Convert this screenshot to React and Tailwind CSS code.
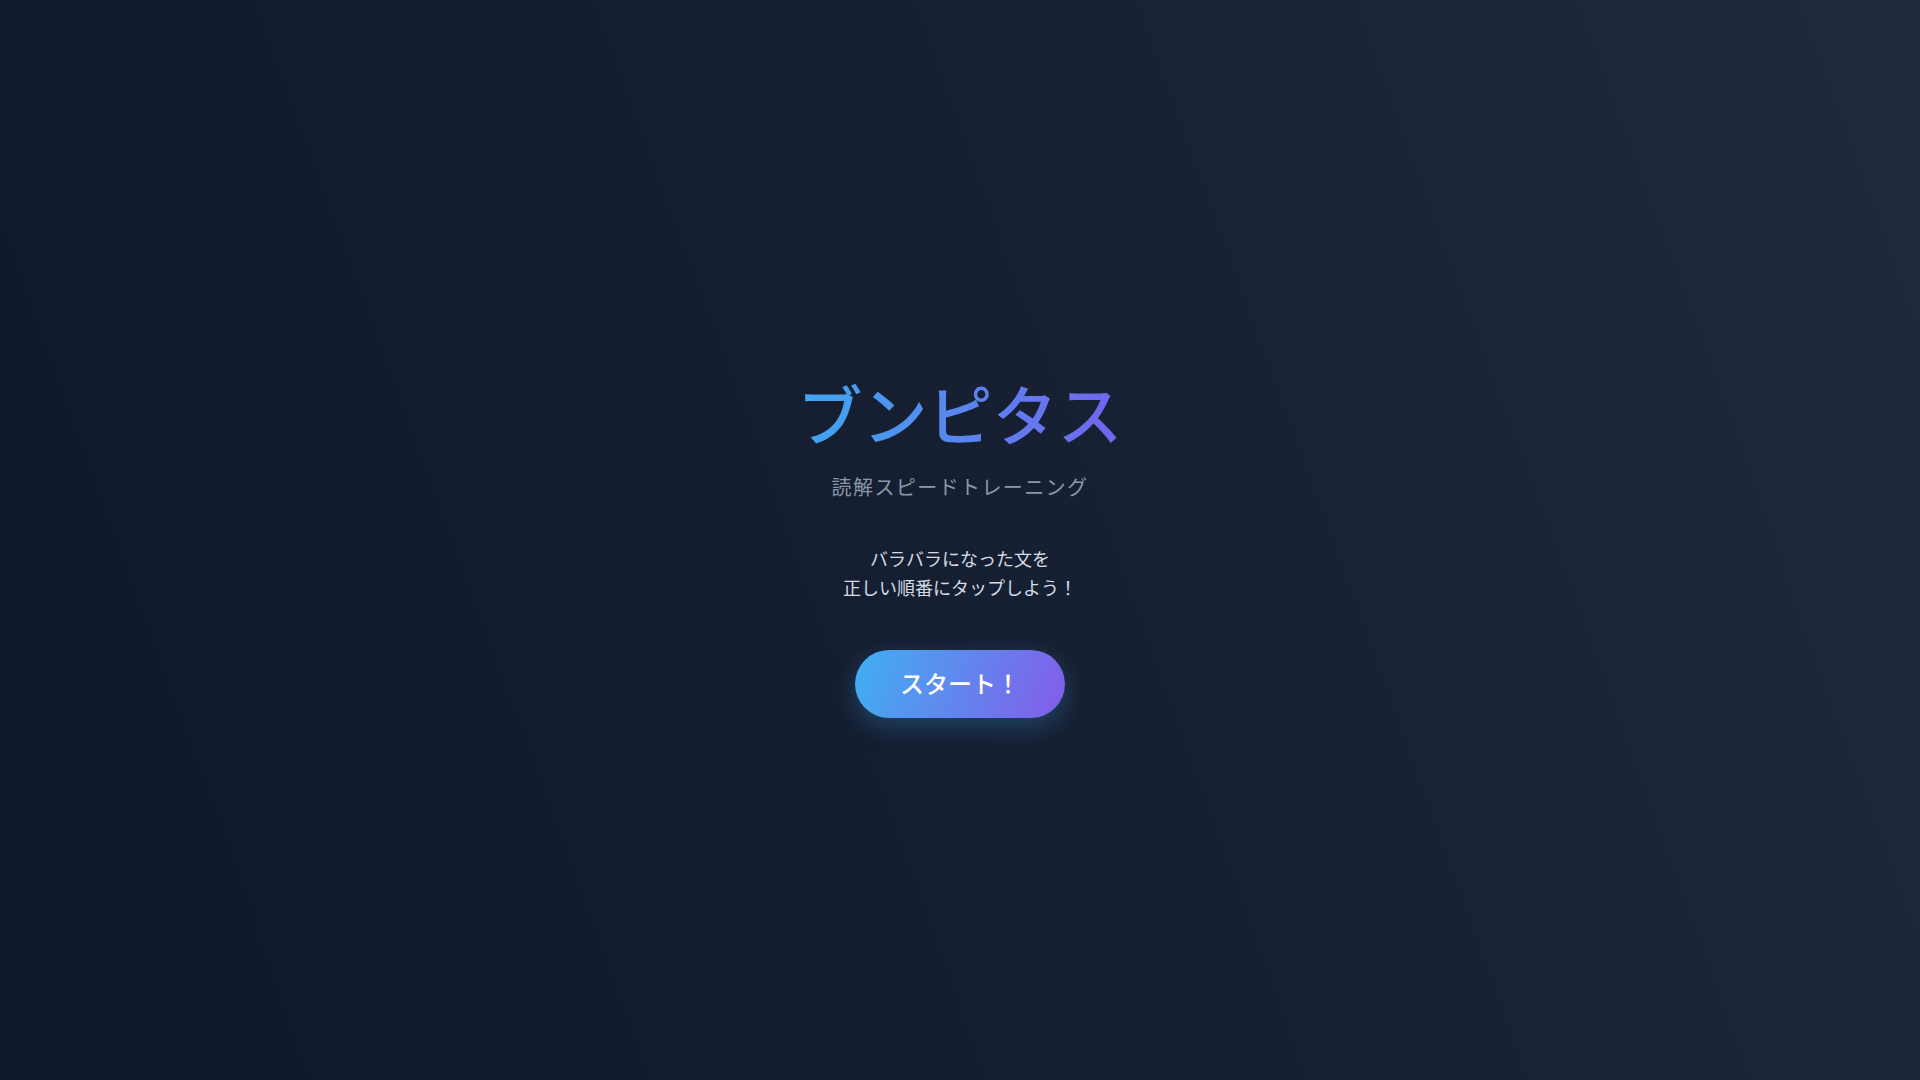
import React from "react";

function App() {
  return (
    <div
      className="min-h-screen w-full flex items-center justify-center bg-[linear-gradient(70deg,#0f172a_0%,#172033_55%,#1f2a3d_100%)]"
      style={{ fontFamily: '"Noto Sans", "Noto Sans CJK JP", sans-serif' }}
    >
      <div className="flex flex-col items-center text-center pt-[14px]">
        {/* タイトル */}
        <h1 className="text-[65px] leading-[77px] font-medium bg-[linear-gradient(90deg,#3ea8f0,#7364ee)] bg-clip-text text-transparent">
          ブンピタス
        </h1>
        <p className="mt-[20px] text-xl leading-7 tracking-[0.07em] text-[#8d97a8]">
          読解スピードトレーニング
        </p>

        {/* 説明 */}
        <p className="mt-[43px] text-lg leading-[29px] text-[#d5dbe4]">
          バラバラになった文を
          <br />
          正しい順番にタップしよう！
        </p>

        <button
          type="button"
          className="mt-[47px] px-[45px] py-[18px] rounded-full text-2xl leading-8 font-medium text-white bg-[linear-gradient(110deg,#3fb0f2,#845ce9)] shadow-[0_8px_24px_rgba(56,170,240,0.28)]"
        >
          スタート！
        </button>
      </div>
    </div>
  );
}

export default App;
